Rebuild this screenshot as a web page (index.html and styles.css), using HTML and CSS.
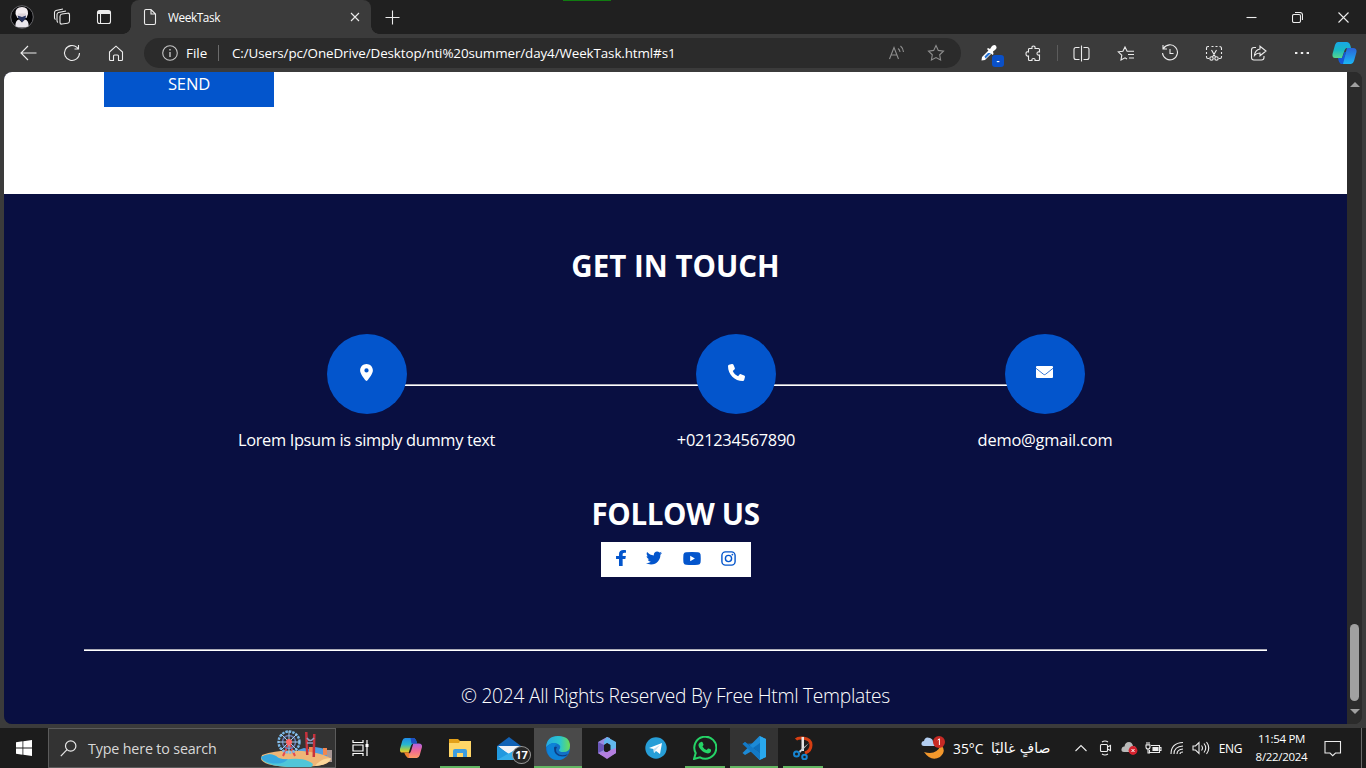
FILE: index.html
```html
<!DOCTYPE html>
<html lang="en">
<head>
<meta charset="utf-8">
<title>WeekTask</title>
<link rel="stylesheet" href="styles.css">
</head>
<body>
<div class="desktop">
  <header class="tabstrip">
    <span class="slot profile"><svg width="24" height="24" viewBox="0 0 24 24"><circle cx="12" cy="12" r="11.300" fill="#050507" stroke="#66666a"/><path d="M5.500 9q-.5-7 6.500-7 6.500 0 6 7l-1.500 4h-9z" fill="#f1ebef"/><path d="M8 8.500h8l-1 4H9z" fill="#dcd3da"/><path d="M7.500 10.500l4.500 1.500 4-1.500-.5 3-3 4-4-4z" fill="#27335f"/><path d="M5.500 21.500q-.5-6 3.500-7l3 3 3-3q4 1 3.500 7-6.500 2-13 0z" fill="#e9e6ec"/></svg></span>
    <span class="slot"><svg class="line" width="18" height="18" viewBox="0 0 18 18"><rect x="7" y="5.500" width="9.500" height="10" rx="2" transform="skewY(-9) translate(0 2)"/><path d="M5 14.500Q4 14 4 12.500V6.500Q4 5 5.500 4.500L13 3M2.500 11.500Q1.500 11 1.500 9.500V4.500Q1.500 3 3 2.500L10 1"/></svg></span>
    <span class="slot wide"><svg class="line" width="16" height="16" viewBox="0 0 16 16"><rect x="1.500" y="1.500" width="13" height="13" rx="2"/><path d="M2 2.500h12M2 3.500h12M2 4.500h12M4.500 5v9" /></svg></span>
    <div class="tab">
      <svg class="line" width="14" height="18" viewBox="0 0 14 18"><path d="M3 1.500h5L12.500 6v9q0 1.500-1.500 1.500H3q-1.500 0-1.500-1.500V3Q1.500 1.500 3 1.500zM8 1.500V6h4.500"/></svg>
      <span class="tab-title">WeekTask</span>
      <svg class="line" width="10" height="10" viewBox="0 0 10 10"><path d="M1 1l8 8M9 1L1 9"/></svg>
    </div>
    <span class="slot newtab"><svg class="line" width="15" height="15" viewBox="0 0 15 15"><path d="M7.500 .5v14M.5 7.500h14"/></svg></span>
    <div class="window-buttons">
      <span><svg class="line" width="11" height="11" viewBox="0 0 11 11"><path d="M.5 5.500h10"/></svg></span>
      <span><svg class="line" width="11" height="11" viewBox="0 0 11 11"><rect x=".5" y="2.500" width="8" height="8" rx="1.500"/><path d="M3 .5h5q2.500 0 2.500 2.500v5"/></svg></span>
      <span><svg class="line" width="11" height="11" viewBox="0 0 11 11"><path d="M.5.5l10 10M10.500.5l-10 10"/></svg></span>
    </div>
    <i class="capture-mark"></i>
  </header>

  <nav class="toolbar">
    <span class="tool"><svg class="line" width="17" height="16" viewBox="0 0 17 16"><path d="M8 1L1 8l7 7M1 8h15.500"/></svg></span>
    <span class="tool"><svg class="line" width="18" height="18" viewBox="0 0 18 18"><path d="M16.500 9A7.500 7.500 0 1 1 14 3.400l1 1.100M15.500 1v4h-4"/></svg></span>
    <span class="tool"><svg class="line" width="16" height="17" viewBox="0 0 16 17"><path d="M1.500 7L8 1.200 14.500 7v7.500q0 1-1 1h-3V11q0-1-1-1h-3q-1 0-1 1v4.500h-3q-1 0-1-1z"/></svg></span>
    <div class="address">
      <svg class="line info" width="16" height="16" viewBox="0 0 16 16"><circle cx="8" cy="8" r="7.300"/><path d="M8 7v5M8 4v1.500" stroke-width="1.400"/></svg>
      <span class="scheme">File</span>
      <span class="bar"></span>
      <span class="url">C:/Users/pc/OneDrive/Desktop/nti%20summer/day4/WeekTask.html#s1</span>
      <svg class="line dim" width="17" height="16" viewBox="0 0 17 16"><path d="M1.500 14L6 2.500 10.500 14M3 10h6M10 3.500q2 1.500 2 3.500M12.500 1q3 2.500 3 6"/></svg>
      <svg class="line dim star" width="18" height="18" viewBox="0 0 18 18"><path d="M9 1.500l2.300 4.900 5.200.7-3.800 3.700.9 5.300L9 13.600l-4.600 2.500.9-5.300L1.500 7.100l5.200-.7z"/></svg>
    </div>
    <span class="tool picker"><svg width="18" height="18" viewBox="0 0 18 18"><path d="M2 13l7-7 3 3-7 7-3.500.5z" fill="#fff"/><path d="M4.500 12.500L8 9h3l-5.500 5.500z" fill="#2474d8"/><path d="M8 4l2 1 2-3q3-2 4 0 1.500 2-1 4l-2 1.500.5 2.500-1 1L7 5z" fill="#fff"/></svg><b>-</b></span>
    <span class="tool"><svg class="line" width="17" height="17" viewBox="0 0 17 17"><path d="M4 3.500h3q-.5-2.500 1.500-2.500T10 3.500h3.500q1 0 1 1V7q-2.500-.5-2.500 1.500T14.500 10v4.500q0 1-1 1H10q.5-2-1.500-2t-1.500 2H4.500q-1 0-1-1V11Q1 11.500 1 8.800T3.500 7V4.500z"/></svg></span>
    <span class="divider"></span>
    <span class="tool"><svg class="line" width="17" height="17" viewBox="0 0 17 17"><path d="M8.500.5v16M6.500 2.500H3q-2 0-2 2v8q0 2 2 2h3.500M10.500 2.500H14q2 0 2 2v8q0 2-2 2h-3.500"/></svg></span>
    <span class="tool nudge"><svg class="line" width="18" height="17" viewBox="0 0 18 17"><path d="M10 14l-2-1.200L4 15l.8-4.800L1.300 6.800l4.600-.6L8 2l2.100 4.200H17M11 9.500h6M12 13h5"/></svg></span>
    <span class="tool nudge"><svg class="line" width="18" height="18" viewBox="0 0 18 18"><path d="M2.500 4.500A7.500 7.500 0 1 1 1.500 9M2 1v4h4M9 5v4.500h3.500"/></svg></span>
    <span class="tool nudge"><svg class="line" width="18" height="17" viewBox="0 0 18 17"><path d="M4 1.500H3q-1.500 0-1.500 1.500v2m0 2v2m0 2v1q0 1.500 1.500 1.500h1M6.500 1.500h2m2 0h2m2 0q2 0 2 2V5m0 2v2m0 2v1q0 1.500-1.500 1.500h-1M6.500 5l4 7M11.500 5l-4 7"/><circle cx="6.500" cy="13.500" r="1.700"/><circle cx="11.500" cy="13.500" r="1.700"/></svg></span>
    <span class="tool nudge"><svg class="line" width="17" height="16" viewBox="0 0 17 16"><path d="M6 2.500H4q-2.500 0-2.500 2.500v7.500Q1.500 15 4 15h7.500q2.500 0 2.500-2.500V11M10 1.200L16 6l-6 4.800V8Q6.500 8 4.500 10.500 5 5 10 4z"/></svg></span>
    <span class="tool nudge"><svg width="16" height="4" viewBox="0 0 16 4"><path d="M1 1h2.400v2H1zM6.800 1h2.400v2H6.800zM12.600 1H15v2h-2.400z" fill="#eee"/></svg></span>
    <span class="tool copilot"><svg width="25" height="24" viewBox="0 0 25 24"><defs><linearGradient id="ca" x2="0" y2="1"><stop stop-color="#18a7e8"/><stop offset=".5" stop-color="#18b8c4"/><stop offset="1" stop-color="#58d68c"/></linearGradient><linearGradient id="cb" x2="0" y2="1"><stop stop-color="#2a63d8"/><stop offset="1" stop-color="#1bb6f4"/></linearGradient></defs><path d="M6 1h9q3 0 4 6h-4q-2 0-3 4l-2 6H3q-3 0-2.500-4L3 4q1-3 3-3z" fill="url(#ca)"/><path d="M19 23h-9q-2 0-3-5h3q2 0 3-4l2-7h6q4 0 3.500 4L22 20q-1 3-3 3z" fill="url(#cb)"/><path d="M6 17h4l2.500-6h1.500l-3 12h-1q-3 0-4-6z" fill="#1558d6"/></svg></span>
  </nav>

  <main class="viewport">
    <div class="page">
      <section class="form-end"><div class="send">SEND</div></section>
      <footer class="contact">
        <h2 class="t-touch">GET IN TOUCH</h2>
        <div class="contact-row">
          <div class="item place"><span class="disc"><svg width="13" height="17" viewBox="0 0 384 512"><path fill="#fff" d="M215.700 499.200C267 435 384 279.400 384 192C384 86 298 0 192 0S0 86 0 192c0 87.400 117 243 168.300 307.200c12.300 15.300 35.100 15.300 47.400 0zM192 128a64 64 0 1 1 0 128 64 64 0 1 1 0-128z"/></svg></span><p>Lorem Ipsum is simply dummy text</p></div>
          <div class="item phone"><span class="disc"><svg width="17" height="17" viewBox="0 0 512 512"><path fill="#fff" d="M164.900 24.600c-7.700-18.600-28-28.500-47.400-23.200l-88 24C12.100 30.200 0 46 0 64C0 311.400 200.600 512 448 512c18 0 33.800-12.100 38.600-29.500l24-88c5.300-19.400-4.600-39.700-23.200-47.400l-96-40c-16.300-6.800-35.200-2.100-46.300 11.600L304.700 368C234.300 334.700 177.300 277.700 144 207.300L193.300 167c13.700-11.200 18.400-30 11.600-46.300l-40-96z"/></svg></span><p>+021234567890</p></div>
          <div class="item mail"><span class="disc"><svg width="17" height="12" viewBox="0 0 17 12"><rect width="17" height="12" rx="1" fill="#fff"/><path d="M0 2.300l7.500 6q1 .7 2 0l7.500-6" fill="none" stroke="#0355cc" stroke-width=".8"/></svg></span><p>demo@gmail.com</p></div>
        </div>
        <h2 class="t-follow">FOLLOW US</h2>
        <div class="social">
          <svg width="10" height="16" viewBox="22 0 275 512" preserveAspectRatio="none"><path d="M279.140 288l14.220-92.660h-88.910v-60.130c0-25.350 12.420-50.060 52.240-50.060h40.420V6.260S260.430 0 225.360 0c-73.220 0-121.080 44.380-121.080 124.720v70.620H22.890V288h81.390v224h100.170V288z"/></svg>
          <svg width="16" height="16" viewBox="0 0 512 512"><path d="M459.370 151.716c.325 4.548.325 9.097.325 13.645 0 138.720-105.583 298.558-298.558 298.558-59.452 0-114.680-17.219-161.137-47.106 8.447.974 16.568 1.299 25.340 1.299 49.055 0 94.213-16.568 130.274-44.832-46.132-.975-84.792-31.188-98.112-72.772 6.498.974 12.995 1.624 19.818 1.624 9.421 0 18.843-1.300 27.614-3.573-48.081-9.747-84.143-51.980-84.143-102.985v-1.299c13.969 7.797 30.214 12.670 47.431 13.319-28.264-18.843-46.781-51.005-46.781-87.391 0-19.492 5.197-37.360 14.294-52.954 51.655 63.675 129.300 105.258 216.365 109.807-1.624-7.797-2.599-15.918-2.599-24.040 0-57.828 46.782-104.934 104.934-104.934 30.213 0 57.502 12.670 76.670 33.137 23.715-4.548 46.456-13.320 66.599-25.340-7.798 24.366-24.366 44.833-46.132 57.827 21.117-2.273 41.584-8.122 60.426-16.243-14.292 20.791-32.161 39.308-52.628 54.253z"/></svg>
          <svg width="18" height="13" viewBox="0 0 18 13"><path fill-rule="evenodd" d="M3 .3q6-.6 12 0 2 .2 2.500 2 .5 4.200 0 8.400-.5 1.800-2.500 2-6 .6-12 0-2-.2-2.500-2-.5-4.200 0-8.400Q1 .5 3 .3zM7.200 3.800v5.400l4.700-2.700z"/></svg>
          <svg width="15" height="15" viewBox="0 0 15 15"><g fill="none" stroke="#0355cc" stroke-width="1.400"><rect x=".9" y=".9" width="13.200" height="13.200" rx="3.600"/><circle cx="7.500" cy="7.500" r="3.100"/></g><circle cx="11.400" cy="3.600" r=".9"/></svg>
        </div>
        <hr>
        <p class="copyright">© 2024 All Rights Reserved By Free Html Templates</p>
      </footer>
    </div>
    <aside class="scrollbar"><i class="up"></i><i class="thumb"></i><i class="down"></i></aside>
  </main>

  <footer class="taskbar">
    <span class="start"><svg width="16" height="16" viewBox="0 0 16 16"><path fill="#fff" d="M0 2.200l6.500-.9v6.300H0zM7.300 1.200L16 0v7.600H7.300zM0 8.400h6.500v6.300L0 13.800zM7.300 8.400H16V16l-8.700-1.200z"/></svg></span>
    <div class="search">
      <svg width="17" height="17" viewBox="0 0 17 17" fill="none" stroke="#e8e8e8" stroke-width="1.200"><circle cx="10.700" cy="6" r="5.200"/><path d="M7 9.700L.8 16.200"/></svg>
      <span class="placeholder">Type here to search</span>
      <svg class="scene" width="73" height="38" viewBox="0 0 73 38">
        <path d="M38 21l6-2 5 1 6-2 6 1 4 1 7 3v9H38z" fill="#4e9de4"/><path d="M49 18h4v6h-4zM63 19h4v7h-4z" fill="#f18750"/><path d="M67 21h5v12h-5z" fill="#a99896"/>
        <path d="M2 26Q18 20 42 22q22 2 29 8-2 8-34 8Q4 38 1 30z" fill="#efb677"/><path d="M1 28q8-5 15-1 4 4 14 3 12-1 18 2 8 3 3 6-48 2-50-10z" fill="#50c6d8"/><path d="M1 28q8-5 15-1 4 4 12 3-5 6-17 4Q2 32 1 28z" fill="#38a8df"/><path d="M55 37q6-8 16-8-2 7-16 8z" fill="#fbd79a"/>
        <path d="M29 14l-6 13M29 14l6 13" stroke="#e44b51" stroke-width="2"/>
        <circle cx="29" cy="13" r="10.500" fill="none" stroke="#79b8e9" stroke-width="2.400" stroke-dasharray="2.500 1"/><circle cx="29" cy="13" r="6.500" fill="none" stroke="#6879b2" stroke-width="1.500"/><path d="M29 2v22M18 13h22M21 5l16 16M37 5L21 21" stroke="#9fcbed"/><circle cx="29" cy="13" r="3" fill="#ff6868"/>
        <path d="M45 3h2.500l1 23H46zM53 5h2.500l-.5 23h-2.500z" fill="#c8313c"/><path d="M47 9q3 5 7 0M47 14h6" fill="none" stroke="#909ec4" stroke-width="1.500"/>
      </svg>
    </div>
    <span class="taskview"><svg width="17" height="16" viewBox="0 0 17 16" fill="none" stroke="#fff" stroke-width="1.200"><path d="M1 0v2.500h10V0M1 16v-2.500h10V16M1 5h10v6H1zM15 0v16"/><path d="M13.500 4h3v3h-3z" fill="#fff" stroke="none"/></svg></span>
    <div class="apps">
      <span class="app"><svg width="24" height="22" viewBox="0 0 25 24"><defs><linearGradient id="cc" x2="0" y2="1"><stop stop-color="#208ae8"/><stop offset=".45" stop-color="#27b7cf"/><stop offset=".8" stop-color="#a6cf47"/><stop offset="1" stop-color="#ffc32b"/></linearGradient><linearGradient id="cd" x2="0" y2="1"><stop stop-color="#ad62e8"/><stop offset=".5" stop-color="#f06994"/><stop offset="1" stop-color="#ff9a64"/></linearGradient></defs><path d="M6 1h9q3 0 4 6h-4q-2 0-3 4l-2 6H3q-3 0-2.500-4L3 4q1-3 3-3z" fill="url(#cc)"/><path d="M19 23h-9q-2 0-3-5h3q2 0 3-4l2-7h6q4 0 3.500 4L22 20q-1 3-3 3z" fill="url(#cd)"/><path d="M12 1h3q3 0 4 6h-6z" fill="#1d4fc3"/><path d="M5 17h5q1 3 0 6-3-1-5-6z" fill="#f1822e"/></svg></span>
      <span class="app open"><svg width="22" height="18" viewBox="0 0 22 18"><path d="M0 0h9l2 2h10v4H0z" fill="#e3a019"/><path d="M0 4h10l1-2h11v16H0z" fill="#ffd667"/><path d="M4 18v-6q0-2 2-2h10q2 0 2 2v6h-4v-4H8v4z" fill="#3c9de0"/></svg></span>
      <span class="app"><svg class="letter" width="24" height="23" viewBox="0 0 24 23"><path d="M0 9L12 0l12 9v14H0z" fill="#1262b5"/><path d="M1 9h22l-11 9z" fill="#f3f3f6"/><path d="M0 9l12 8 12-8v14H0z" fill="#2199df"/><path d="M0 23L18 13l6 10z" fill="#34aeea"/></svg><b class="count">17</b></span>
      <span class="app active"><svg width="24" height="24" viewBox="0 0 24 24"><defs><linearGradient id="ed"><stop stop-color="#27a9e2"/><stop offset=".6" stop-color="#2bc7cb"/><stop offset="1" stop-color="#6ddd55"/></linearGradient></defs><circle cx="12" cy="12" r="12" fill="#1270c6"/><path d="M0 11Q1 0 12 0q12 0 12 10 0 6-7 6-4 0-4-2 3-4-1-6Q6 5 0 11z" fill="url(#ed)"/><path d="M1 11q5-6 10-3-4 2-2 8 3 7 11 4-3 4-8 4Q1 24 1 11z" fill="#0d83d8"/><path d="M8 12q0 10 12 8l2-2q-7 3-11-1-2-3 0-6-3-1-3 1z" fill="#0b3e83"/></svg></span>
      <span class="app"><svg width="20" height="22" viewBox="0 0 20 22"><path d="M10 0L1 5v11l5 3 4-3-3-2V8l6-3V1z" fill="#9a8be0"/><path d="M10 0l9 5v11l-6 3V8l-3-2-3 2V4z" fill="#62b7ed"/><path d="M1 16l9-1 3-2 6-2v5l-9 6z" fill="#b47fe0"/><path d="M7 8l3-2 3.500 2v5L10 15l-3-2z" fill="#1c1c1c"/><path d="M1 5v11l6-3V8z" fill="#6a56b8"/></svg></span>
      <span class="app"><svg width="22" height="22" viewBox="0 0 22 22"><circle cx="11" cy="11" r="10.700" fill="#279ed7"/><path d="M4 11l13-5-2 11-4-3-2 2-.5-4z" fill="#fff"/><path d="M8.500 12L15 8l-5 6-1 2z" fill="#c7dff0"/></svg></span>
      <span class="app open"><svg width="24" height="24" viewBox="0 0 24 24"><path d="M1 23l1.700-6A11 11 0 1 1 7 21.300z" fill="none" stroke="#25d366" stroke-width="2"/><path d="M7.500 6.200q1.700-1 2.300.5l.7 1.700q.3.700-1 2 1.500 2.700 4.200 3.700l1.300-1.500q.5-.5 3 1 .5 3.500-3 3.800-4 0-7.700-4.300-3.200-4-.8-6.400z" fill="#25d366"/></svg></span>
      <span class="app active faint"><svg width="24" height="24" viewBox="0 0 24 24"><path d="M18 7v10L3 6 .5 8z" fill="#0d70bd"/><path fill-rule="evenodd" d="M17.500 0L24 3v18l-6.500 3L9 15.500 3 19 .5 17 17.500 0zM18 7l-7 5 7 5z" fill="#1c8ad6"/><path d="M.5 8L3 6l15 11v7z" fill="#1379c6"/><path d="M17.500 0L24 3v18l-6.500 3q.5-.5.5-2V2q0-1.500-.5-2z" fill="#29a8ee"/></svg></span>
      <span class="app open"><svg width="20" height="24" viewBox="0 0 20 24"><path d="M3 3.500Q5 1.500 10 2q8 1 8 7 0 6-6 8" fill="none" stroke="#d63e12" stroke-width="3"/><path d="M8.500 1h2.500v14H8.500z" fill="#e5e5e5"/><path d="M16 7L7 17l-1-2z" fill="#c9d1d6"/><g fill="none" stroke="#1684d0" stroke-width="2"><circle cx="3.500" cy="18" r="2.500"/><circle cx="11.500" cy="21" r="2.300"/></g></svg></span>
    </div>
    <div class="weather"><svg width="24" height="24" viewBox="0 0 24 24"><path d="M20 9q6 6-1 12-9 5-16-5 12 4 17-7z" fill="#f2972c"/><path d="M3 10q-3 0-2.500-3Q1 5 3 5q1-5 6-3 3 1 3 4 3 0 3 2t-3 2z" fill="#b3cef1"/><circle cx="18" cy="6" r="6" fill="#c72a25"/><path d="M16.700 4l1.700-1.200V9" fill="none" stroke="#fff"/></svg><span class="temp">35°C</span><span class="cond" dir="rtl" lang="ar">صافٍ غالبًا</span></div>
    <div class="tray">
      <span><svg class="line" width="12" height="8" viewBox="0 0 12 8"><path d="M.5 7L6 1.500 11.500 7"/></svg></span>
      <span><svg class="line" width="13" height="16" viewBox="0 0 13 16"><rect x="1.500" y="4.500" width="7" height="7" rx="1"/><path d="M8.500 7l3-1.500v5l-3-1.500M3 2q3-2 6 0M3 14q3 2 6 0"/></svg></span>
      <span><svg width="17" height="14" viewBox="0 0 17 14"><path d="M3 11Q0 11 .5 8 1 5 3.500 5.500 4 1 8 1q3 0 4 4 3 0 3 3t-3 3z" fill="#b9b9b9"/><circle cx="12" cy="9.500" r="4.400" fill="#d5222e"/><path d="M10.500 8l3 3m0-3l-3 3" stroke="#fff"/></svg></span>
      <span><svg class="line" width="17" height="13" viewBox="0 0 17 13"><path d="M6 3.500h8.500v7h-10V8M14.500 5.500h1.500v3h-1.500M1 3h4v2q0 2-2 2T1 5zM2 3V0M4 3V0M3 7v4h2"/><path d="M8 5.500h5v3H8z" fill="#eee"/></svg></span>
      <span><svg class="line" width="14" height="14" viewBox="0 0 14 14"><path d="M1 13Q1 2 13 1.500M4 13q0-7.500 9-8M7 13q0-4.500 6-5M10 13q0-2 3-2" /></svg></span>
      <span><svg class="line" width="18" height="14" viewBox="0 0 18 14"><path d="M1 5h2.500L7 1.500v11L3.500 9H1zM9.500 4.500q2 2.500 0 5M12 2.500q3.500 4.500 0 9M14.500 1q4.500 6 0 12"/></svg></span>
    </div>
    <span class="lang">ENG</span>
    <div class="clock"><span>11:54 PM</span><span>8/22/2024</span></div>
    <span class="notes"><svg class="line" width="18" height="17" viewBox="0 0 18 17"><path d="M1 1.500h15.500v11.500h-5L8.700 15.700 6 13H1z"/></svg></span>
    <i class="show-desktop"></i>
  </footer>
</div>
</body>
</html>
```
FILE: styles.css
```css
* { box-sizing: border-box; }
body { margin: 0; font-family: "Open Sans", "Noto Sans", sans-serif; overflow: hidden; }
h2, p { margin: 0; }
svg { display: block; flex: none; }
.desktop { width: 1366px; height: 768px; display: flex; flex-direction: column; background: #3b3b3b; }
.line { fill: none; stroke: #ececec; stroke-width: 1.1; }

.tabstrip { height: 34px; display: flex; background: #202020; position: relative; }
.slot { width: 40px; display: flex; align-items: center; justify-content: center; }
.profile { margin-left: 2px; }
.slot.wide { width: 44px; margin-right: 5px; }
.slot.newtab { width: 42px; }
.tab { width: 240px; display: flex; align-items: center; padding: 0 11px 0 12px; background: #3b3b3b; border-radius: 8px 8px 0 0; position: relative; }
.tab::before, .tab::after { content: ""; position: absolute; bottom: 0; width: 8px; height: 8px; }
.tab::before { left: -8px; background: radial-gradient(circle at 0 0, #202020 7.500px, #3b3b3b 8px); }
.tab::after { right: -8px; background: radial-gradient(circle at 100% 0, #202020 7.500px, #3b3b3b 8px); }
.tab-title { flex: 1; margin-left: 11px; padding-bottom: 1px; font-size: 11.800px; letter-spacing: -.4px; color: #fff; }
.window-buttons { margin-left: auto; display: flex; }
.window-buttons span { width: 46px; display: flex; align-items: center; justify-content: center; }
.capture-mark { position: absolute; left: 563px; top: 0; width: 48px; height: 1px; background: #107c10; }

.toolbar { height: 38px; display: flex; align-items: center; padding-left: 6px; }
.tool { width: 44px; height: 38px; display: flex; align-items: center; justify-content: center; position: relative; }
.tool.nudge { padding-left: 2px; }
.tool.copilot { width: 41px; padding-left: 2px; }
.address { width: 817px; height: 30px; margin: 0 6px; padding: 0 16px 0 18px; border-radius: 15px; background: #2b2b2b; display: flex; align-items: center; color: #fff; font-size: 13.400px; }
.scheme { margin-left: 8px; width: 32px; }
.bar { width: 1px; height: 16px; background: #6b6b6b; margin-right: 13px; }
.url { flex: 1; letter-spacing: -.1px; }
.dim { stroke: #8e8e8e; }
.info { stroke: #c5c5c5; }
.star { margin-left: 22px; }
.picker b { position: absolute; left: 25px; top: 21px; width: 12px; height: 12px; border-radius: 3px; background: #0a50c8; color: #fff; font-size: 9px; line-height: 11px; text-align: center; }
.divider { width: 1px; height: 16px; margin: 0 1px 0 2px; background: #5c5c5c; }

.viewport { height: 652px; margin: 0 4px; display: flex; border-radius: 8px; overflow: hidden; background: #2b2b2b; }
.page { width: 1343px; background: #090f41; }
.form-end { height: 122px; padding-left: 100px; background: #fff; }
.send { width: 170px; height: 35px; background: #0355cc; color: #fff; font-size: 16.600px; line-height: 23px; letter-spacing: -.2px; text-align: center; }
.contact { padding-top: 50px; color: #fff; text-align: center; }
.contact h2 { height: 44px; line-height: 43px; font-size: 29.500px; font-weight: 700; }
.contact-row { width: 875px; height: 118px; margin: 46px 0 0 234px; display: flex; justify-content: space-between; position: relative; }
.contact-row::before { content: ""; position: absolute; left: 129px; top: 50px; width: 679px; height: 2px; background: linear-gradient(#a9a9b5 50%, #fff 50%); }
.item { display: flex; flex-direction: column; align-items: center; position: relative; }
.place { width: 257px; }
.phone { width: 118px; }
.mail { width: 136px; }
.mail .disc { margin-right: 1px; }
.disc { width: 80px; height: 80px; border-radius: 50%; background: #0355cc; display: flex; align-items: center; justify-content: center; padding-bottom: 4px; }
.item p { margin-top: 14px; font-size: 16.400px; line-height: 24px; white-space: nowrap; letter-spacing: -.34px; }
.item.phone p { letter-spacing: -.27px; }
.item.mail p { letter-spacing: -.2px; }
.contact .t-follow { margin-top: 40px; letter-spacing: -.35px; }
.social { width: 150px; height: 35px; margin: 6px auto 0 597px; padding: 0 15px 3px; background: #fff; display: flex; align-items: center; justify-content: space-between; fill: #0355cc; }
.contact hr { width: 1183px; height: 2px; margin: 72px 0 0 80px; border: 0; background: linear-gradient(#a9a9b5 50%, #fff 50%); }
.copyright { margin-top: 31px; font-size: 19.200px; line-height: 28px; font-weight: 300; letter-spacing: -.26px; }
.scrollbar { width: 15px; display: flex; flex-direction: column; align-items: center; padding: 10px 0 10px; background: #2b2b2b; }
.up { border: 5px solid transparent; border-top: 0; border-bottom: 5px solid #a0a0a0; }
.thumb { width: 9px; height: 77px; margin-top: auto; border-radius: 5px; background: #a0a0a0; }
.down { margin-top: 8px; border: 5px solid transparent; border-bottom: 0; border-top: 5px solid #a0a0a0; }

.taskbar { height: 40px; margin-top: 4px; display: flex; align-items: stretch; background: #1c1c1c; color: #fff; }
.taskbar > span { display: flex; align-items: center; justify-content: center; }
.start, .taskview { width: 48px; }
.search { width: 288px; display: flex; align-items: center; padding-left: 11px; background: #333; border: 1px solid #5b5b5b; }
.placeholder { flex: 1; margin-left: 11px; font-size: 14.300px; letter-spacing: -.16px; color: #d8d8d8; }
.scene { margin-right: 2px; }
.apps { display: flex; gap: 1px; margin-left: 3px; }
.app { width: 48px; display: flex; align-items: center; justify-content: center; position: relative; }
.active { background: #4a4a4a; box-shadow: inset 0 -2px #62b662; }
.active.faint { background: #333; }
.open { background: linear-gradient(#62b662, #62b662) center bottom / 40px 2px no-repeat; }
.count { position: absolute; left: 27px; top: 18px; width: 19px; height: 18px; border: 1px solid #999; border-radius: 50%; background: #262626; font-size: 11px; line-height: 16px; text-align: center; }
.weather { margin-left: 94px; width: 130px; display: flex; align-items: center; font-size: 13.800px; }
.temp { margin-left: 8px; width: 38px; white-space: nowrap; }
.cond { font-family: "DejaVu Sans", sans-serif; font-size: 14px; white-space: nowrap; }
.tray { margin-left: 18px; display: flex; }
.tray span { width: 24px; display: flex; align-items: center; justify-content: center; }
.lang { width: 35px; font-size: 12px; letter-spacing: -.3px; }
.clock { width: 67px; display: flex; flex-direction: column; align-items: center; padding-top: 2px; font-size: 11.500px; line-height: 18px; letter-spacing: -.3px; white-space: nowrap; }
.notes { width: 36px; }
.show-desktop { margin-left: auto; margin-right: 4px; width: 1px; background: #6a6a6a; }
```
